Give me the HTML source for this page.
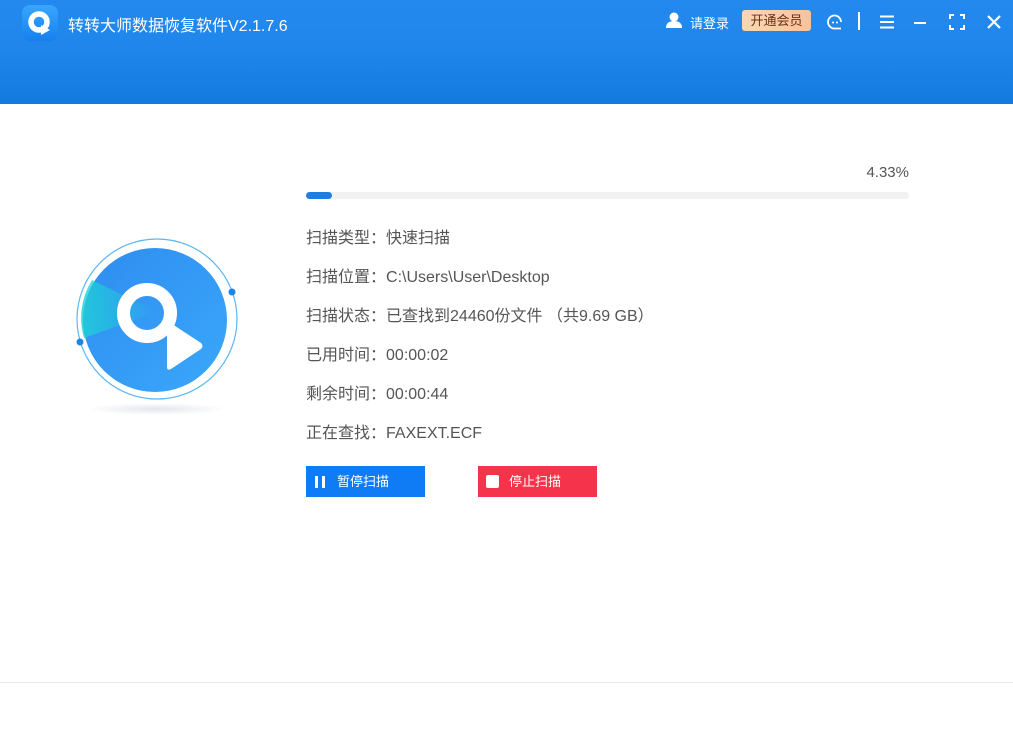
<!DOCTYPE html>
<html><head><meta charset="utf-8"><style>
*{margin:0;padding:0;box-sizing:border-box}
body{width:1013px;height:751px;background:#fff;position:relative;overflow:hidden;font-family:"Liberation Sans","Noto Sans CJK SC",sans-serif}
.hdr{position:absolute;left:0;top:0;width:1013px;height:104px;background:linear-gradient(#2389ee 0,#1f86ec 50px,#137bdf 104px)}
.logo{position:absolute;left:22px;top:5px;width:36px;height:36px;border-radius:8px;background:linear-gradient(#3aa6ff,#1680ee)}
.title{position:absolute;left:68px;top:12px;color:#fff;font-size:16px}
.t{position:absolute;color:#fff}
.info{position:absolute;left:306px;font-size:16px;color:#555}
.info b{font-weight:normal;font-family:"Noto Sans CJK SC",sans-serif}
.btn{position:absolute;top:466px;width:119px;height:31px;color:#fff;font-size:13px;line-height:31px}
</style></head><body>
<div class="hdr">
 <div class="logo"><svg width="36" height="36" viewBox="0 0 36 36"><circle cx="17" cy="17" r="8" fill="none" stroke="#fff" stroke-width="5.5"/><path d="M19 20 L28 25 L19 30Z" fill="#fff"/></svg></div>
 <div class="title">转转大师数据恢复软件V2.1.7.6</div>
 <svg style="position:absolute;left:665px;top:12px" width="18" height="16" viewBox="0 0 18 16"><circle cx="9" cy="5" r="4.5" fill="#fff"/><path d="M1 16 Q1 9 9 9 Q17 9 17 16Z" fill="#fff"/></svg>
 <div class="t" style="left:690px;top:13px;font-size:13px">请登录</div>
 <div style="position:absolute;left:742px;top:10px;width:69px;height:21px;border-radius:3px;background:linear-gradient(90deg,#f9d6b8,#f4c39d);color:#6b2f10;font-size:13px;text-align:center;line-height:21px">开通会员</div>
 <svg style="position:absolute;left:826px;top:13px" width="18" height="18" viewBox="0 0 18 18"><path d="M15 9 A6.5 6.5 0 1 0 9 15.5 L15 15.5" fill="none" stroke="#fff" stroke-width="1.8"/><circle cx="7" cy="9.5" r="1" fill="#fff"/><circle cx="11" cy="9.5" r="1" fill="#fff"/></svg>
 <div style="position:absolute;left:858px;top:12px;width:1.5px;height:18px;background:#fff"></div>
 <svg style="position:absolute;left:879px;top:15px" width="16" height="14"><path d="M1 1.5H15M1 7H15M1 12.5H15" stroke="#fff" stroke-width="2"/></svg>
 <svg style="position:absolute;left:913px;top:15px" width="14" height="14"><path d="M1 8H13" stroke="#fff" stroke-width="2"/></svg>
 <svg style="position:absolute;left:949px;top:14px" width="16" height="16"><path d="M1 5V1H5M11 1H15V5M15 11V15H11M5 15H1V11" fill="none" stroke="#fff" stroke-width="2"/></svg>
 <svg style="position:absolute;left:986px;top:14px" width="16" height="16"><path d="M2 2L14 14M14 2L2 14" stroke="#fff" stroke-width="2.2"/></svg>
</div>

<svg style="position:absolute;left:70px;top:230px" width="175" height="190" viewBox="0 0 175 190">
 <defs><linearGradient id="g" x1="0" y1="0" x2="1" y2="1"><stop offset="0" stop-color="#2f8cf0"/><stop offset="1" stop-color="#3aa8fb"/></linearGradient>
 <linearGradient id="w" x1="0" y1="0" x2="1" y2="0"><stop offset="0" stop-color="#1ed0d8"/><stop offset="1" stop-color="#1ed0d8" stop-opacity="0"/></linearGradient>
 <radialGradient id="sh"><stop offset="0" stop-color="#e3e6ec"/><stop offset="1" stop-color="#fff"/></radialGradient></defs>
 <ellipse cx="87" cy="179" rx="70" ry="6" fill="url(#sh)"/>
 <circle cx="87" cy="89" r="80" fill="none" stroke="#5ab6f3" stroke-width="1.2"/>
 <circle cx="85" cy="90" r="72" fill="url(#g)"/>
 <path d="M87 82 L14 108 A72 72 0 0 1 22 50Z" fill="url(#w)" opacity=".85"/>
 <circle cx="77" cy="83" r="23.5" fill="none" stroke="#fff" stroke-width="13"/>
 <path d="M99 92 L131 113 Q134 116 131 119 L101 139 Q97 141 97 137 V95 Q97 91 99 92Z" fill="#fff"/>
 <circle cx="162" cy="62" r="3.5" fill="#1a86ea"/>
 <circle cx="10" cy="112" r="3.5" fill="#1a86ea"/>
</svg>

<div style="position:absolute;right:104px;top:164px;font-size:15px;color:#555">4.33%</div>
<div style="position:absolute;left:306px;top:192px;width:603px;height:7px;border-radius:4px;background:#f2f2f2"></div>
<div style="position:absolute;left:306px;top:192px;width:26px;height:7px;border-radius:4px;background:#1d7fe6"></div>

<div class="info" style="top:224px">扫描类型<b>：</b>快速扫描</div>
<div class="info" style="top:263px">扫描位置<b>：</b>C:\Users\User\Desktop</div>
<div class="info" style="top:302px">扫描状态<b>：</b>已查找到24460份文件 （共9.69 GB）</div>
<div class="info" style="top:341px">已用时间<b>：</b>00:00:02</div>
<div class="info" style="top:380px">剩余时间<b>：</b>00:00:44</div>
<div class="info" style="top:419px">正在查找<b>：</b>FAXEXT.ECF</div>

<div class="btn" style="left:306px;background:#0f7cf5"><span style="position:absolute;left:9px;top:10px;width:3px;height:12px;background:#fff"></span><span style="position:absolute;left:16px;top:10px;width:3px;height:12px;background:#fff"></span><span style="position:absolute;left:31px">暂停扫描</span></div>
<div class="btn" style="left:478px;background:#f5334a"><span style="position:absolute;left:8px;top:9px;width:13px;height:13px;border-radius:2px;background:#fff"></span><span style="position:absolute;left:31px">停止扫描</span></div>

<div style="position:absolute;left:0;top:682px;width:1013px;height:1px;background:#e8e8e8"></div>
</body></html>
